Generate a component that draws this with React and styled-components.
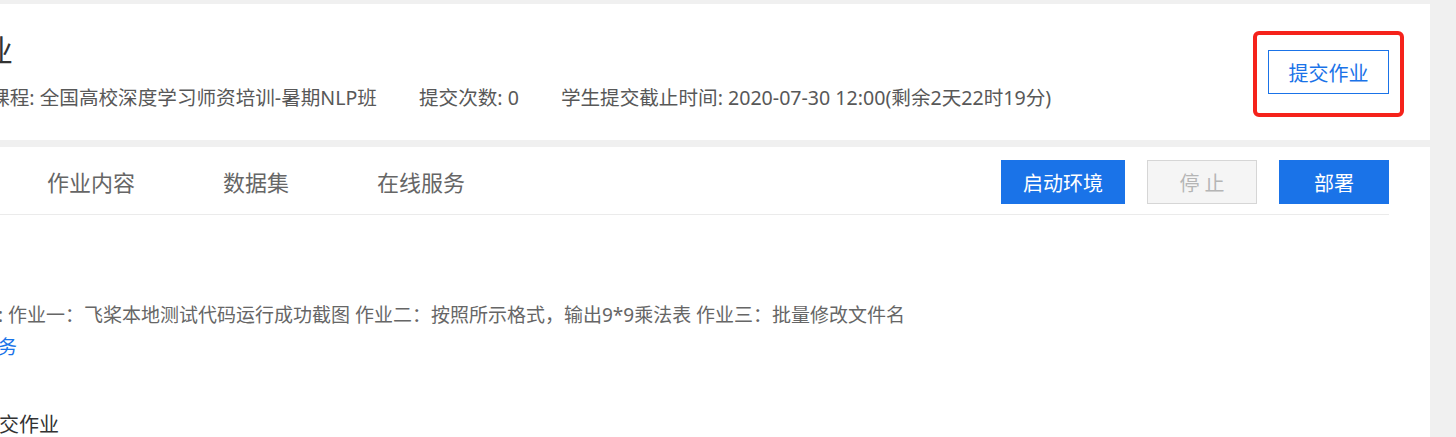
import React from "react";
import styled, { createGlobalStyle } from "styled-components";

const GlobalStyle = createGlobalStyle`
  html, body {
    margin: 0;
    padding: 0;
    background: #f0f0f0;
    overflow: hidden;
  }
  body {
    font-family: "Noto Sans", "Noto Sans CJK SC", sans-serif;
  }
`;

const Viewport = styled.div`
  width: 100%;
  height: 437px;
  overflow: hidden;
`;

const Page = styled.div`
  margin: 0 26px 0 -69px;
  padding-top: 4px;
  display: flex;
  flex-direction: column;
  gap: 7px;
`;

const HeaderCard = styled.section`
  background: #fff;
  height: 136px;
  box-sizing: border-box;
  padding: 28px 41px 0 20px;
  display: flex;
  justify-content: space-between;
  align-items: flex-start;
`;

const Info = styled.div`
  display: flex;
  flex-direction: column;
  gap: 16px;
`;

const Title = styled.h1`
  margin: 0;
  font-size: 31px;
  line-height: 36px;
  font-weight: 400;
  color: #333;
`;

const Meta = styled.div`
  display: flex;
  gap: 42px;
  font-size: 19.6px;
  line-height: 28px;
  color: #585858;
  white-space: nowrap;
`;

const ActionWrap = styled.div`
  position: relative;
  margin-top: 18px;
`;

const OutlineButton = styled.button`
  width: 121px;
  height: 44px;
  box-sizing: border-box;
  border: 1px solid #1a73e8;
  background: #fff;
  color: #1a73e8;
  font-family: inherit;
  font-size: 20px;
  padding: 0;
  cursor: pointer;
`;

const Annotation = styled.span`
  position: absolute;
  top: -19px;
  bottom: -23px;
  left: -15px;
  right: -15px;
  border: 4px solid #f5221b;
  border-radius: 6px;
  pointer-events: none;
`;

const ContentCard = styled.section`
  background: #fff;
  min-height: 300px;
  padding: 13px 41px 0 48px;
`;

const TabBar = styled.div`
  display: flex;
  justify-content: space-between;
  align-items: flex-start;
  padding-bottom: 10px;
  border-bottom: 1px solid #ebebeb;
`;

const TabList = styled.div`
  display: flex;
  padding-left: 24px;
`;

const Tab = styled.div`
  padding: 0 44px;
  font-size: 22px;
  line-height: 44px;
  color: #666;
  white-space: nowrap;
`;

const ButtonGroup = styled.div`
  display: flex;
  gap: 22px;
`;

const ActionButton = styled.button`
  width: ${(p) => p.$w}px;
  height: 44px;
  box-sizing: border-box;
  padding: 0;
  font-family: inherit;
  font-size: 20px;
  border: 1px solid ${(p) => (p.$disabled ? "#d6d6d6" : "#1a73e8")};
  background: ${(p) => (p.$disabled ? "#f5f5f5" : "#1a73e8")};
  color: ${(p) => (p.$disabled ? "#b5b5b5" : "#fff")};
  cursor: ${(p) => (p.$disabled ? "not-allowed" : "pointer")};
`;

const Body = styled.div`
  padding-top: 84px;
`;

const Description = styled.p`
  margin: 0;
  font-size: 19px;
  line-height: 32px;
  color: #666;
  white-space: nowrap;
`;

const LinkLine = styled.a`
  display: block;
  font-size: 19px;
  line-height: 32px;
  color: #1a73e8;
  text-decoration: none;
`;

const SectionTitle = styled.h2`
  margin: 46px 0 0;
  font-size: 20px;
  line-height: 32px;
  font-weight: 400;
  color: #333;
`;

export default function App() {
  return (
    <Viewport>
      <GlobalStyle />
      <Page>
        <HeaderCard>
          <Info>
            <Title>作业</Title>
            <Meta>
              <span>所属课程: 全国高校深度学习师资培训-暑期NLP班</span>
              <span>提交次数: 0</span>
              <span>学生提交截止时间: 2020-07-30 12:00(剩余2天22时19分)</span>
            </Meta>
          </Info>
          <ActionWrap>
            <OutlineButton>提交作业</OutlineButton>
            <Annotation />
          </ActionWrap>
        </HeaderCard>

        <ContentCard>
          <TabBar>
            <TabList>
              <Tab>作业内容</Tab>
              <Tab>数据集</Tab>
              <Tab>在线服务</Tab>
            </TabList>
            <ButtonGroup>
              <ActionButton $w={124}>启动环境</ActionButton>
              <ActionButton $w={110} $disabled>停 止</ActionButton>
              <ActionButton $w={110}>部署</ActionButton>
            </ButtonGroup>
          </TabBar>
          <Body>
            <Description>
              注: 作业一：飞桨本地测试代码运行成功截图 作业二：按照所示格式，输出9*9乘法表 作业三：批量修改文件名
            </Description>
            <LinkLine href="#">任务</LinkLine>
            <SectionTitle>提交作业</SectionTitle>
          </Body>
        </ContentCard>
      </Page>
    </Viewport>
  );
}
